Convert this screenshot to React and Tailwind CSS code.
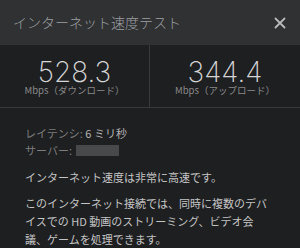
import React from "react";

export default function App() {
  return (
    <div
      className="h-[248px] w-[300px] overflow-hidden bg-[#1e1f21] text-[#c4c4c4]"
      style={{ fontFamily: '"Noto Sans CJK JP", "Liberation Sans", sans-serif' }}
    >
      {/* Header */}
      <div className="flex h-[45px] items-center justify-between bg-[#2f3133] pl-[13px] pr-[14px]">
        <h1 className="text-[14px] font-light text-[#9d9fa1]">インターネット速度テスト</h1>
        <svg width="12" height="12" viewBox="0 0 12 12" className="text-[#b8babc]">
          <path d="M1.5 1.5l9 9M10.5 1.5l-9 9" stroke="currentColor" strokeWidth="1.8" strokeLinecap="round" />
        </svg>
      </div>

      {/* Results */}
      <div className="grid h-[63px] grid-cols-2 border-b border-[#38393b]">
        <div className="flex flex-col items-center border-r border-[#38393b] pt-[14px]">
          <span className="text-[28px] font-extralight leading-[26px] text-[#d6d6d6]" style={{ fontFamily: "Inter, sans-serif" }}>
            528.3
          </span>
          <span className="text-[9.5px] leading-[10px] text-[#8a8a8a]">Mbps（ダウンロード）</span>
        </div>
        <div className="flex flex-col items-center pt-[14px]">
          <span className="text-[28px] font-extralight leading-[26px] text-[#d6d6d6]" style={{ fontFamily: "Inter, sans-serif" }}>
            344.4
          </span>
          <span className="text-[9.5px] leading-[10px] text-[#8a8a8a]">Mbps（アップロード）</span>
        </div>
      </div>

      {/* Details */}
      <div className="pl-[25px] pr-[25px] pt-[17px] text-[11px]">
        <div className="leading-[17px] text-[#7c7c7c]">
          <p>
            レイテンシ: <span className="text-[#b4b4b4]">6 ミリ秒</span>
          </p>
          <p className="flex items-center">
            サーバー:
            <span className="ml-[4px] inline-block h-[11px] w-[43px] bg-[#48494b]" />
          </p>
        </div>
        <p className="mt-[9px] leading-[18px]">インターネット速度は非常に高速です。</p>
        <p className="mt-[8px] leading-[18px]">
          このインターネット接続では、同時に複数のデバイスでの HD 動画のストリーミング、ビデオ会議、ゲームを処理できます。
        </p>
      </div>
    </div>
  );
}
